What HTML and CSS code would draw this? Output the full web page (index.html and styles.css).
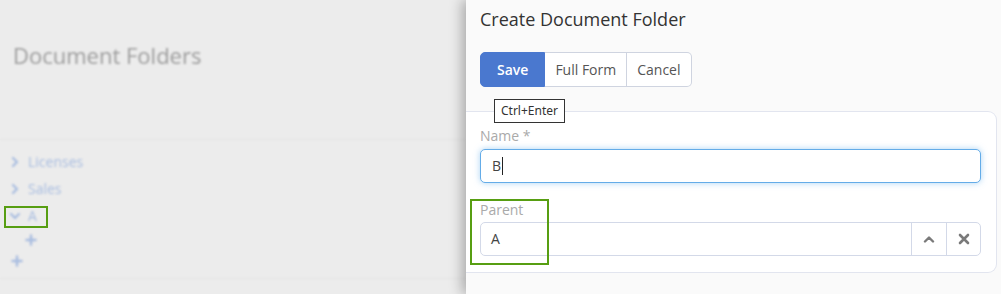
FILE: index.html
```html
<!DOCTYPE html>
<html>
<head>
<meta charset="utf-8">
<link rel="stylesheet" href="styles.css">
</head>
<body>
<div class="page">
  <div class="main">
    <div class="main-inner">
      <div class="main-header"><h1 class="main-title">Document Folders</h1></div>
      <div class="tree">
        <div class="tree-row">
          <svg class="chev" width="10" height="12" viewBox="0 0 10 12"><path d="M3 2 L7 6 L3 10" fill="none" stroke="#a9bde0" stroke-width="2.2" stroke-linecap="round" stroke-linejoin="round"/></svg>
          <span class="tree-label">Licenses</span>
        </div>
        <div class="tree-row">
          <svg class="chev" width="10" height="12" viewBox="0 0 10 12"><path d="M3 2 L7 6 L3 10" fill="none" stroke="#a9bde0" stroke-width="2.2" stroke-linecap="round" stroke-linejoin="round"/></svg>
          <span class="tree-label">Sales</span>
        </div>
        <div class="tree-row">
          <svg class="chev chev-down" width="12" height="12" viewBox="0 0 12 12"><path d="M2 4 L6 8 L10 4" fill="none" stroke="#a9bde0" stroke-width="2.2" stroke-linecap="round" stroke-linejoin="round"/></svg>
          <span class="tree-label">A</span>
        </div>
        <div class="tree-plus tree-plus-child">
          <svg width="12" height="12" viewBox="0 0 12 12"><path d="M6 1.5 V10.5 M1.5 6 H10.5" fill="none" stroke="#a9bde0" stroke-width="2.4" stroke-linecap="round"/></svg>
        </div>
        <div class="tree-plus">
          <svg width="12" height="12" viewBox="0 0 12 12"><path d="M6 1.5 V10.5 M1.5 6 H10.5" fill="none" stroke="#a9bde0" stroke-width="2.4" stroke-linecap="round"/></svg>
        </div>
      </div>
    </div>
    <div class="mark mark-tree"></div>
  </div>
  <div class="panel">
    <h2 class="panel-title">Create Document Folder</h2>
    <div class="btn-group">
      <button class="btn btn-primary">Save</button>
      <button class="btn">Full Form</button>
      <button class="btn">Cancel</button>
    </div>
    <div class="tooltip">Ctrl+Enter</div>
    <div class="card">
      <label class="field-label">Name *</label>
      <div class="input input-focus"><span class="value">B</span><span class="caret"></span></div>
      <label class="field-label field-label-2">Parent</label>
      <div class="input input-group">
        <span class="value grow">A</span>
        <span class="addon">
          <svg width="12" height="8" viewBox="0 0 12 8"><path d="M2 6.5 L6 2.5 L10 6.5" fill="none" stroke="#7a7a7a" stroke-width="2.4" stroke-linecap="round" stroke-linejoin="round"/></svg>
        </span>
        <span class="addon">
          <svg width="12" height="12" viewBox="0 0 12 12"><path d="M2 2 L10 10 M10 2 L2 10" fill="none" stroke="#7a7a7a" stroke-width="2.6" stroke-linecap="round"/></svg>
        </span>
      </div>
    </div>
    <div class="mark mark-parent"></div>
  </div>
</div>
</body>
</html>
```

FILE: styles.css
```css
* { box-sizing: border-box; }
html, body { margin: 0; padding: 0; }
body {
  width: 1001px;
  height: 294px;
  overflow: hidden;
  font-family: "Open Sans", "Noto Sans", sans-serif;
  background: #ececec;
}
.page {
  display: flex;
  width: 1001px;
  height: 294px;
}
.main {
  width: 466px;
  flex: none;
  position: relative;
  background: #ececec;
}
.main-inner {
  filter: blur(1.1px);
}
.main-header {
  height: 140px;
  padding: 40px 0 0 13px;
  border-bottom: 1px solid #e3e3e3;
}
.main-title {
  margin: 0;
  font-size: 22px;
  line-height: 30px;
  font-weight: 400;
  color: #9c9c9c;
}
.tree {
  height: 139px;
  padding: 8px 0 0 10px;
  border-bottom: 1px solid #e3e3e3;
  color: #a9bde0;
}
.tree-row {
  display: flex;
  align-items: center;
  height: 27px;
}
.chev {
  display: block;
  margin-right: 8px;
}
.chev-down { margin-right: 7px; margin-left: -1px; }
.tree-label { font-size: 14px; line-height: 20px; }
.tree-plus {
  height: 21px;
  display: flex;
  align-items: center;
  padding-left: 1px;
}
.tree-plus svg { display: block; }
.tree-plus-child { padding-left: 15px; }

.mark {
  position: absolute;
  border: 2px solid #579e12;
}
.mark-tree { left: 4px; top: 206px; width: 44px; height: 22px; }
.mark-parent { left: 4px; top: 199px; width: 79px; height: 66px; }

.panel {
  flex: 1;
  position: relative;
  z-index: 2;
  background: #fafafa;
  box-shadow: -4px 0 12px rgba(0, 0, 0, 0.28);
  padding: 7px 4px 0 14px;
}
.panel-title {
  margin: 0;
  font-size: 18px;
  line-height: 24px;
  font-weight: 400;
  color: #333;
}
.btn-group {
  display: flex;
  margin-top: 21px;
  height: 35px;
}
.btn {
  font-family: "Open Sans", "Noto Sans", sans-serif;
  font-size: 14px;
  color: #555;
  background: #fff;
  border: 1px solid #cfd4e0;
  border-left: none;
  padding: 0 10px;
  height: 35px;
  margin: 0;
}
.btn:last-child { border-radius: 0 5px 5px 0; }
.btn-primary {
  background: #4a78cf;
  border: 1px solid #4a78cf;
  color: #fff;
  font-weight: 600;
  padding: 0 16px;
  border-radius: 5px 0 0 5px;
}
.tooltip {
  position: absolute;
  left: 28px;
  top: 99px;
  z-index: 3;
  background: #fff;
  border: 1px solid #333;
  font-size: 12px;
  line-height: 22px;
  padding: 0 6px;
  color: #333;
  font-family: "Noto Sans", "Open Sans", sans-serif;
}
.card {
  margin-top: 24px;
  margin-left: -14px;
  background: #fff;
  border: 1px solid #e2e5ef;
  border-left: none;
  border-radius: 0 9px 9px 0;
  padding: 14px 15px 16px 14px;
}
.field-label {
  display: block;
  font-size: 14px;
  line-height: 20px;
  color: #aaa;
  margin-bottom: 3px;
}
.field-label-2 { margin-top: 17px; margin-bottom: 2px; }
.input {
  height: 34px;
  border: 1px solid #d3d9e8;
  border-radius: 5px;
  background: #fff;
  display: flex;
  align-items: center;
  font-size: 14px;
  color: #444;
}
.input-focus {
  border-color: #64ace8;
  box-shadow: 0 0 6px rgba(102, 175, 233, 0.55);
  padding-left: 11px;
}
.value { line-height: 20px; }
.caret {
  width: 1px;
  height: 18px;
  background: #222;
  margin-left: 1px;
}
.input-group .grow { flex: 1; padding-left: 10px; }
.addon {
  width: 35px;
  height: 100%;
  border-left: 1px solid #d3d9e8;
  display: flex;
  align-items: center;
  justify-content: center;
}
.addon:last-child { width: 34px; }
```
